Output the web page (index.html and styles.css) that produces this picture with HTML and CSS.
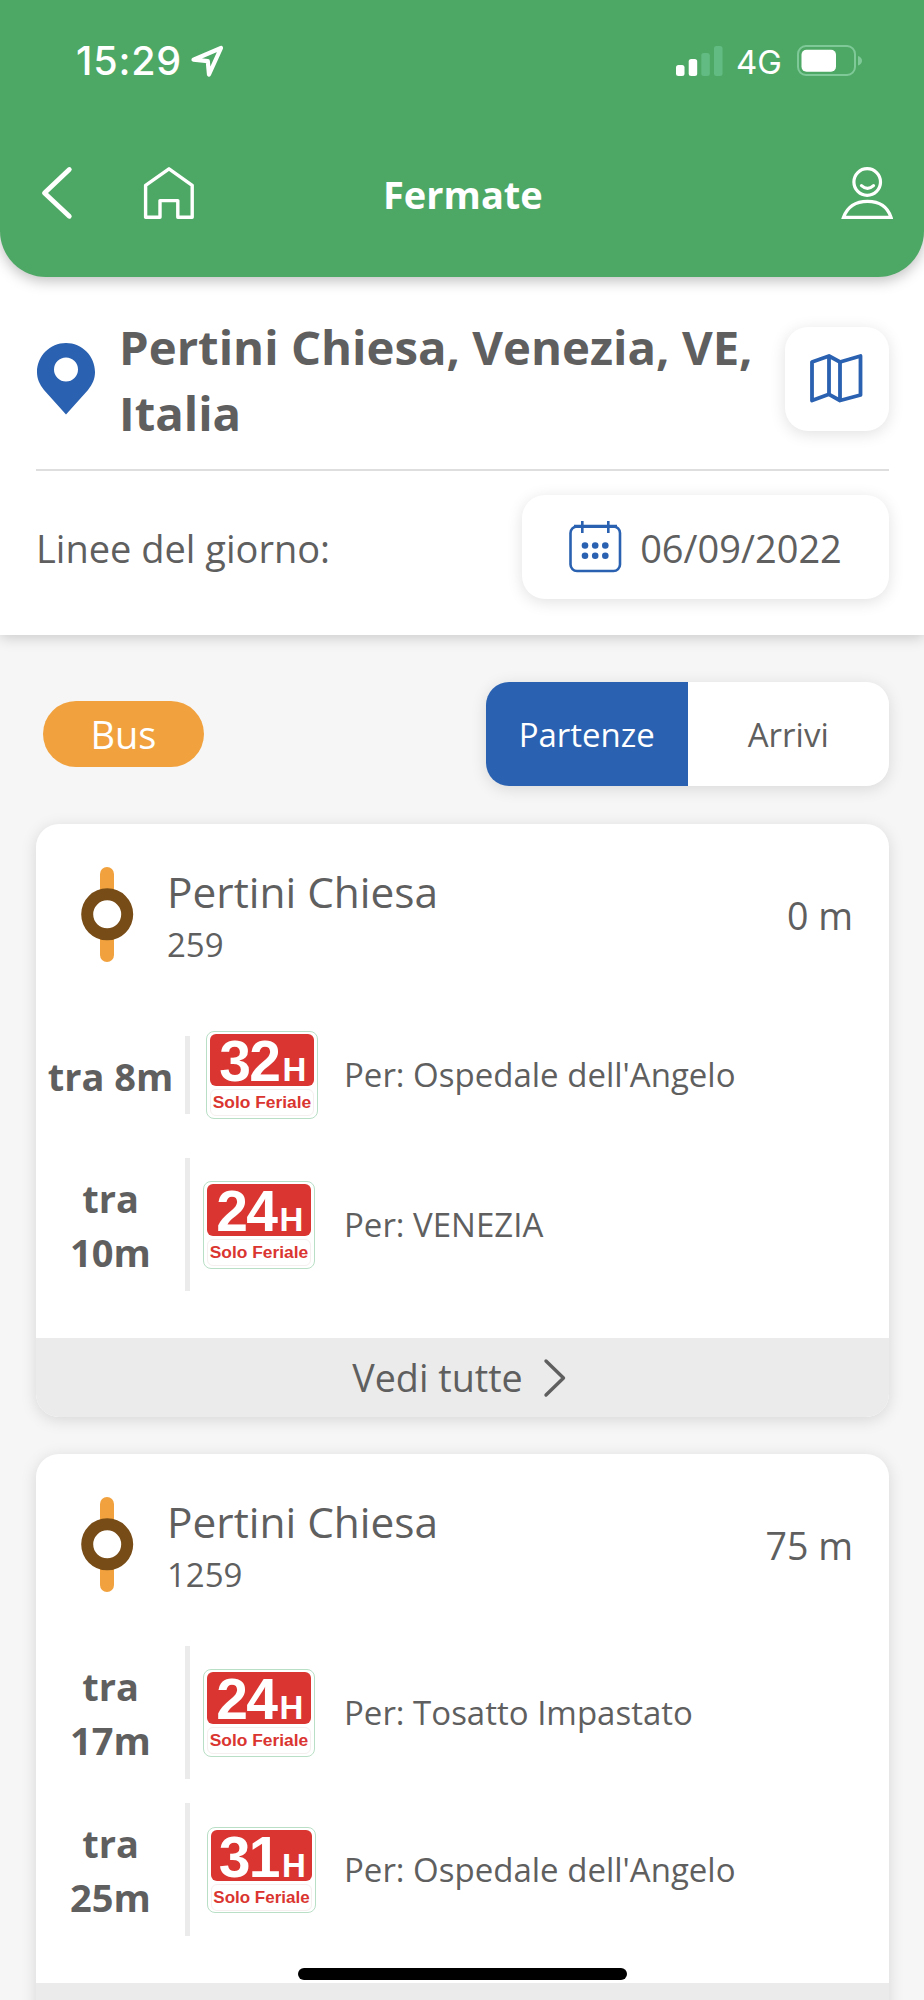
FILE: index.html
```html
<!DOCTYPE html>
<html lang="it">
<head>
  <meta charset="UTF-8">
  <meta name="viewport" content="width=device-width, initial-scale=1.0">
  <title>Fermate</title>
  <link rel="stylesheet" href="styles.css">
</head>
<body>
  <header class="header">
    <div class="status-bar">
      <span class="time">15:29</span>
      <svg class="location" width="34" height="34" viewBox="0 0 34 34" fill="none" stroke="#fff" stroke-width="4.2" stroke-linejoin="round">
        <path d="M3.5 15.7 L31 4 L19 30.5 L17.8 17.2 Z"/>
      </svg>
      <svg class="signal" width="48" height="30" viewBox="0 0 48 30">
        <rect x="0" y="19" width="8.5" height="11" rx="2.5" fill="#fff"/>
        <rect x="12.7" y="13" width="8.5" height="17" rx="2.5" fill="#fff"/>
        <rect x="25.3" y="7" width="8.5" height="23" rx="2.5" fill="#62bb82"/>
        <rect x="38" y="0" width="8.5" height="30" rx="2.5" fill="#62bb82"/>
      </svg>
      <span class="network">4G</span>
      <svg class="battery" width="66" height="32" viewBox="0 0 66 32">
        <rect x="1" y="1" width="57" height="29" rx="8" fill="none" stroke="#7fc999" stroke-width="2"/>
        <rect x="4.5" y="4.7" width="34.5" height="22" rx="5" fill="#fff"/>
        <path d="M61 11 Q65 12.5 65 15.7 Q65 19 61 20.5 Z" fill="#7fc999"/>
      </svg>
    </div>
    <nav class="nav">
      <svg class="back" width="32" height="54" viewBox="0 0 32 54" fill="none" stroke="#fff" stroke-width="4.8" stroke-linecap="round" stroke-linejoin="round">
        <path d="M28.3 3.5 L3.5 27 L28.3 50.3"/>
      </svg>
      <svg class="home" width="52" height="54" viewBox="0 0 52 54" fill="none" stroke="#fff" stroke-width="3.4" stroke-linejoin="round">
        <path d="M2.6 19.3 L26 2.8 L49.2 19.3 V51.2 H34.8 V34.6 H17 V51.2 H2.6 Z"/>
      </svg>
      <h1>Fermate</h1>
      <svg class="user" width="52" height="54" viewBox="0 0 52 54" fill="none" stroke="#fff" stroke-width="3.2">
        <circle cx="26.2" cy="16" r="13.3"/>
        <path d="M20.5 19.6 Q26.5 25 32.5 19.6" stroke-linecap="round"/>
        <path d="M2.5 51.3 C7 39 17 35.3 26.5 35.3 C36 35.3 46 39 50 51.3 Z"/>
      </svg>
    </nav>
  </header>

  <section class="search">
    <div class="place">
      <svg class="pin" width="58" height="72" viewBox="0 0 58 72">
        <path fill="#2a61b0" fill-rule="evenodd" d="M29 0 C45 0 58 13 58 29 C58 36 55.5 41 51 47 L29 71.5 L7 47 C2.5 41 0 36 0 29 C0 13 13 0 29 0 Z M29 14.5 A12 12 0 1 0 29 38.5 A12 12 0 1 0 29 14.5 Z"/>
      </svg>
      <h2>Pertini Chiesa, Venezia, VE, Italia</h2>
      <button class="map-button">
        <svg width="54" height="50" viewBox="0 0 54 50" fill="none" stroke="#2a61b0" stroke-width="3.8" stroke-linejoin="round">
          <path d="M2 8 L19 2 L30 8 L50.5 2 V41 L30 46.5 L19 40.3 L2 46.5 Z"/>
          <path d="M19 2 V40.3 M30 8 V46.5"/>
        </svg>
      </button>
    </div>
    <div class="day">
      <span>Linee del giorno:</span>
      <button class="date-button">
        <svg width="53" height="52" viewBox="0 0 53 52" fill="none" stroke="#2a61b0">
          <rect x="1.5" y="5.5" width="49.5" height="44.5" rx="6.5" stroke-width="2.6"/>
          <path d="M5 5.3 H48" stroke-width="3.2"/>
          <path d="M13.3 0 V12 M39.3 0 V12" stroke-width="2.6"/>
          <g fill="#2a61b0" stroke="none">
            <circle cx="16" cy="24.5" r="3.3"/>
            <circle cx="26.2" cy="24.5" r="3.3"/>
            <circle cx="36.3" cy="24.5" r="3.3"/>
            <circle cx="16" cy="34.7" r="3.3"/>
            <circle cx="26.2" cy="34.7" r="3.3"/>
            <circle cx="36.3" cy="34.7" r="3.3"/>
          </g>
        </svg>
        <span>06/09/2022</span>
      </button>
    </div>
  </section>

  <main>
    <div class="filters">
      <button class="chip">Bus</button>
      <div class="toggle">
        <button class="active">Partenze</button>
        <button>Arrivi</button>
      </div>
    </div>

    <article class="card">
      <div class="stop">
        <svg class="stop-icon" width="53" height="96" viewBox="0 0 53 96">
          <rect x="19" y="0" width="14" height="95" rx="7" fill="#f1a23e"/>
          <circle cx="26.2" cy="47.3" r="20" fill="#fff" stroke="#784c16" stroke-width="12"/>
        </svg>
        <div class="stop-text">
          <h3>Pertini Chiesa</h3>
          <p>259</p>
        </div>
        <span class="distance">0 m</span>
      </div>
      <div class="row short">
        <div class="when">tra 8m</div>
        <div class="line shifted">
          <div class="number">32<small>H</small></div>
          <div class="note">Solo Feriale</div>
        </div>
        <div class="dest">Per: Ospedale dell'Angelo</div>
      </div>
      <div class="row">
        <div class="when">tra 10m</div>
        <div class="line">
          <div class="number">24<small>H</small></div>
          <div class="note">Solo Feriale</div>
        </div>
        <div class="dest">Per: VENEZIA</div>
      </div>
      <div class="all">
        <span>Vedi tutte</span>
        <svg width="24" height="40" viewBox="0 0 24 40" fill="none" stroke="#5f5f5f" stroke-width="3.4" stroke-linecap="round" stroke-linejoin="round">
          <path d="M3 3 L20.5 20 L3 37"/>
        </svg>
      </div>
    </article>

    <article class="card">
      <div class="stop">
        <svg class="stop-icon" width="53" height="96" viewBox="0 0 53 96">
          <rect x="19" y="0" width="14" height="95" rx="7" fill="#f1a23e"/>
          <circle cx="26.2" cy="47.3" r="20" fill="#fff" stroke="#784c16" stroke-width="12"/>
        </svg>
        <div class="stop-text">
          <h3>Pertini Chiesa</h3>
          <p>1259</p>
        </div>
        <span class="distance">75 m</span>
      </div>
      <div class="row">
        <div class="when">tra 17m</div>
        <div class="line">
          <div class="number">24<small>H</small></div>
          <div class="note">Solo Feriale</div>
        </div>
        <div class="dest">Per: Tosatto Impastato</div>
      </div>
      <div class="row">
        <div class="when">tra 25m</div>
        <div class="line small">
          <div class="number">31<small>H</small></div>
          <div class="note">Solo Feriale</div>
        </div>
        <div class="dest">Per: Ospedale dell'Angelo</div>
      </div>
      <div class="all"></div>
    </article>
  </main>

  <div class="home-indicator"></div>
</body>
</html>
```
FILE: styles.css
```css
/* General Styles */
* {
  box-sizing: border-box;
}

body {
  font-family: 'Open Sans', sans-serif;
  font-size: 38px;
  background: #f6f6f6;
  color: #5f5f5f;
  height: 2000px;
  margin: 0;
  overflow: hidden;
}

h1, h2, h3, p {
  margin: 0;
}

svg {
  display: block;
  flex-shrink: 0;
}

button {
  font: inherit;
  color: inherit;
  padding: 0;
  border: none;
  background: #fff;
}

/* Header */
.header {
  position: relative;
  height: 277px;
  padding-top: 45px;
  background: #4ea865;
  color: #fff;
  border-radius: 0 0 46px 46px;
  box-shadow: 0 4px 14px rgba(0, 0, 0, 0.25);
}

.status-bar {
  display: flex;
  align-items: center;
  height: 32px;
  padding: 0 61px 0 76px;
  font-family: Inter, sans-serif;
}

.time {
  width: 114px;
  font-size: 39.5px;
  font-weight: 500;
  letter-spacing: 0.8px;
}

.signal {
  margin-left: auto;
}

.network {
  margin: 1px 15px 0 12px;
  font-size: 33px;
}

.nav {
  display: flex;
  align-items: center;
  height: 54px;
  margin-top: 89px;
  padding: 0 31px 0 41px;
}

.home {
  margin-left: 70px;
}

.nav h1 {
  flex: 1;
  padding: 2px 0 0 188px;
  font-size: 38px;
  font-weight: 700;
}

/* Place and day */
.search {
  height: 404px;
  margin-top: -46px;
  padding: 83px 35px 0 36px;
  background: #fff;
  box-shadow: 0 2px 14px rgba(0, 0, 0, 0.2);
}

.place {
  display: flex;
  align-items: center;
  height: 157px;
  padding-bottom: 25px;
  border-bottom: 2px solid #dedede;
}

.pin {
  margin-left: 1px;
}

.place h2 {
  flex: 1;
  padding: 1px 0 0 24px;
  font-size: 47.3px;
  font-weight: 700;
  line-height: 66px;
}

.map-button,
.date-button {
  display: flex;
  align-items: center;
  justify-content: center;
  width: 104px;
  height: 104px;
  border-radius: 23px;
  box-shadow: 0 3px 16px rgba(0, 0, 0, 0.12);
}

.day {
  display: flex;
  align-items: center;
  justify-content: space-between;
  padding-top: 24px;
}

.day span {
  padding-top: 2px;
}

.date-button {
  width: 367px;
  gap: 18px;
}

/* Filters */
.filters {
  display: flex;
  align-items: center;
  justify-content: space-between;
  padding: 47px 35px 38px 43px;
}

.chip {
  width: 161px;
  height: 66px;
  background: #f1a23e;
  color: #fff;
  border-radius: 33px;
}

.toggle {
  display: flex;
  width: 403px;
  height: 104px;
  font-size: 33px;
  border-radius: 23px;
  overflow: hidden;
  box-shadow: 0 3px 16px rgba(0, 0, 0, 0.12);
}

.toggle button {
  flex: 1;
}

.toggle .active {
  background: #2a61b0;
  color: #fff;
}

/* Stop cards */
.card {
  margin: 0 35px 37px 36px;
  background: #fff;
  border-radius: 23px;
  overflow: hidden;
  box-shadow: 0 3px 16px rgba(0, 0, 0, 0.13);
}

.stop {
  display: flex;
  align-items: flex-start;
  height: 180px;
  padding: 43px 36px 0 45px;
}

.stop-text {
  flex: 1;
  padding-left: 33px;
}

.stop h3 {
  margin-top: -4px;
  font-size: 42.4px;
  font-weight: 400;
  line-height: 58px;
}

.stop p {
  font-size: 33px;
  line-height: 48px;
}

.distance {
  margin-top: 23px;
  font-size: 37.6px;
}

.row {
  display: flex;
  align-items: center;
  height: 157px;
}

.row.short {
  height: 142px;
}

.when {
  display: flex;
  align-items: center;
  justify-content: center;
  width: 154px;
  height: 133px;
  padding: 0 10px;
  border-right: 5px solid #ebebeb;
  font-weight: 700;
  line-height: 54px;
  text-align: center;
}

.short .when {
  height: 78px;
  padding-top: 2px;
}

/* Line badge */
.line {
  flex-shrink: 0;
  width: 112px;
  height: 88px;
  margin-left: 13px;
  padding: 2px 3px;
  border: 1px solid #b9dfc6;
  border-radius: 8px;
  font-family: 'Liberation Sans', sans-serif;
  font-weight: 700;
}

.number {
  height: 52px;
  background: #da3530;
  color: #fff;
  border-radius: 6px;
  font-size: 57px;
  letter-spacing: -1.5px;
  line-height: 55px;
  text-align: center;
  white-space: nowrap;
}

.number small {
  margin-left: 3px;
  font-size: 33px;
}

.note {
  height: 27px;
  margin-top: 3px;
  border: 1px solid #f6efef;
  border-radius: 6px;
  color: #da3530;
  font-size: 17.4px;
  line-height: 25px;
  text-align: center;
  white-space: nowrap;
}

.line.shifted {
  margin-left: 16px;
}

.line.small {
  width: 109px;
  height: 86px;
  margin-left: 17px;
}

.small .number {
  height: 51px;
}

.small .note {
  font-size: 17px;
}

.dest {
  flex: 1;
  padding: 0 0 1px 29px;
  font-size: 33px;
}

.shifted + .dest {
  padding-left: 26px;
}

.small + .dest {
  padding-left: 28px;
}

.all {
  display: flex;
  align-items: center;
  justify-content: center;
  gap: 20px;
  height: 79px;
  margin-top: 35px;
  padding-right: 6px;
  background: #ebebeb;
  font-size: 37.7px;
}

/* iOS home bar */
.home-indicator {
  position: absolute;
  left: 298px;
  top: 1968px;
  width: 329px;
  height: 12px;
  background: #000;
  border-radius: 6px;
}
```
